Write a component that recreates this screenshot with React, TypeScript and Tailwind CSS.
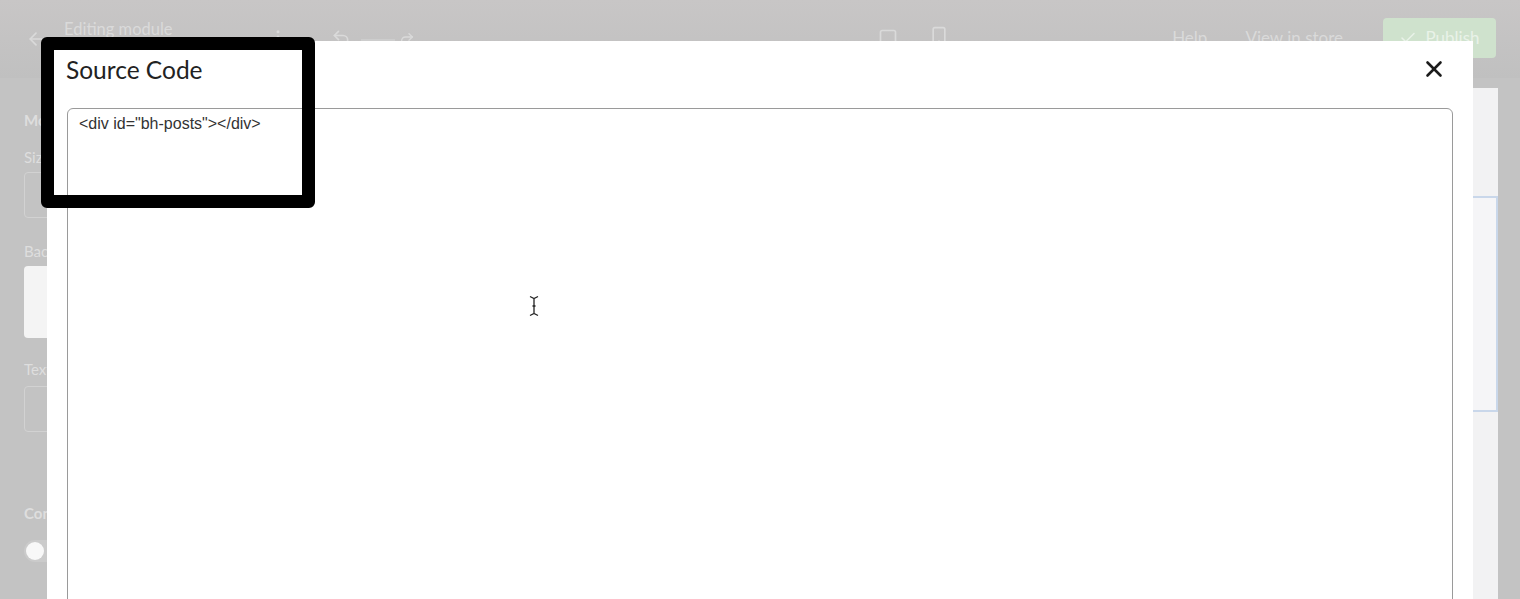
import { X, ArrowLeft, Undo2, Redo2, Check, EllipsisVertical, Square, Smartphone } from 'lucide-react'

export default function App() {
  return (
    <div className="relative w-full h-[599px] overflow-hidden bg-[#c3c3c3]" style={{ fontFamily: 'Lato, "Open Sans", sans-serif' }}>
      {/* Dimmed editor behind the modal */}
      <div className="flex flex-col h-full">
        {/* Top bar */}
        <div className="h-[78px] shrink-0 flex items-center bg-gradient-to-b from-[#c8c6c6] to-[#c0c0c0] pl-[26px] pr-[24px] text-[#dadada]">
          <ArrowLeft size={20} strokeWidth={2} />
          <div className="ml-[18px] -mt-[20px] text-[16.5px]">Editing module</div>
          <EllipsisVertical size={18} className="ml-[96px] -mt-[4px]" />
          <Undo2 size={20} className="ml-[44px] -mt-[2px]" />
          <div className="ml-[10px] w-[34px] h-[2px] bg-[#cdcdcd] mt-[2px]" />
          <Redo2 size={16} className="ml-[4px]" />
          <div className="flex-1" />
          <Square size={20} className="-mt-[2px]" />
          <Smartphone size={20} className="ml-[31px] -mt-[6px] mr-[223px]" />
          <div className="text-[17px] -mt-[2px]">Help</div>
          <div className="ml-[38px] text-[17px] -mt-[2px]">View in store</div>
          <div className="ml-[40px] -mt-[2px] h-[40px] w-[113px] rounded-[4px] bg-[#cfe2cd] flex items-center justify-center gap-[8px] text-[17px] text-[#e9f2e8]">
            <Check size={18} />
            Publish
          </div>
        </div>

        <div className="flex flex-1 min-h-0">
          {/* Left settings */}
          <div className="w-[300px] shrink-0 pl-[24px] pr-[20px] pt-[32px] text-[#dedede] text-[15px] leading-[20px]">
            <div className="font-bold">Module</div>
            <div className="mt-[17px]">Size</div>
            <div className="mt-[5px] h-[46px] rounded-[4px] border border-[#d2d2d2]" />
            <div className="mt-[23px]">Background</div>
            <div className="mt-[5px] h-[72px] rounded-[4px] bg-[#f4f4f4]" />
            <div className="mt-[21px]">Text</div>
            <div className="mt-[7px] h-[46px] rounded-[4px] border border-[#d2d2d2]" />
            <div className="mt-[71px] font-bold">Content</div>
            <div className="mt-[17px] w-[40px] h-[22px] rounded-full bg-[#cbcbcb] flex items-center pl-[2px]">
              <div className="w-[18px] h-[18px] rounded-full bg-[#f8f8f8]" />
            </div>
          </div>

          {/* Main preview */}
          <div className="flex-1 pt-[10px]">
            <div className="h-full bg-[#f2f2f3] pt-[108px]">
              <div className="h-[216px] border-2 border-[#c9d7ea] bg-[#f5f5f7]" />
            </div>
          </div>
          <div className="w-[22px] shrink-0" />
        </div>
      </div>

      {/* Modal */}
      <div className="absolute left-[47px] top-[41px] w-[1426px] h-[620px] bg-white flex flex-col px-[20px]">
        <div className="flex items-center justify-between pt-[13px]">
          <h2 className="text-[24.5px] leading-[32px] text-[#222] -ml-[1px]">Source Code</h2>
          <X size={26} strokeWidth={2.4} className="text-[#1c1c1c] mr-[6px] -mt-[2px]" />
        </div>
        <div className="mt-[22px] flex-1 rounded-[6px] border-[1.5px] border-[#9a9a9a] px-[11px] pt-[5px]">
          <div className="text-[16px] leading-[20px] text-[#333]" style={{ fontFamily: '"Liberation Sans", Arial, sans-serif' }}>
            {'<div id="bh-posts"></div>'}
          </div>
        </div>
      </div>

      {/* Annotation highlight */}
      <div className="absolute left-[41px] top-[37px] w-[274px] h-[171px] rounded-[6px] border-[13px] border-black" />

      {/* Text cursor */}
      <svg className="absolute left-[528px] top-[295px]" width="12" height="22" viewBox="0 0 12 22">
        <path d="M2 1.5 L6 3.5 L10 1.5 M6 3.5 V18.5 M2 20.5 L6 18.5 L10 20.5 M4.5 11 H7.5" stroke="#222" strokeWidth="1.3" fill="none" />
      </svg>
    </div>
  )
}
